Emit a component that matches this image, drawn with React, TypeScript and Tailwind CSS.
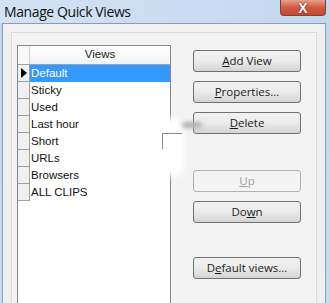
const font = { fontFamily: '"Liberation Sans", Arial, sans-serif' };

const rows = ["Default", "Sticky", "Used", "Last hour", "Short", "URLs", "Browsers", "ALL CLIPS"];

function Btn({ children, top, disabled }: { children: React.ReactNode; top: number; disabled?: boolean }) {
  return (
    <div
      className={
        "flex h-[22px] w-[108px] items-center justify-center rounded-[3px] border text-[11.5px] " +
        (disabled
          ? "border-[#adb2b5] bg-[#f4f4f4] text-[#a0a0a0]"
          : "border-[#707070] bg-gradient-to-b from-[#f2f2f2] via-[#ebebeb] to-[#d4d4d4] text-[#1a1a1a]")
      }
      style={{ marginTop: top }}
    >
      {children}
    </div>
  );
}

export default function App() {
  return (
    <div
      className="relative flex h-[303px] w-[329px] flex-col overflow-hidden bg-gradient-to-b from-[#c2d7ef] to-[#c9dcf1]"
      style={{ fontFamily: '"Liberation Sans", Arial, sans-serif' }}
    >
      {/* title bar */}
      <div className="relative flex h-[23px] shrink-0 items-center bg-gradient-to-r from-[#d3e3f5] to-[#c3d7ee] pl-[4px]">
        <span className="text-[14px] tracking-[-0.4px] text-[#111]" style={{ fontFamily: '"Open Sans", "Liberation Sans", sans-serif' }}>
          Manage Quick Views
        </span>
        <div className="absolute right-[3px] top-0 flex h-[16px] w-[46px] items-center justify-center rounded-b-[4px] border border-t-0 border-[#8a3c30] bg-gradient-to-b from-[#e6a08f] via-[#cf5a44] to-[#c44a33]">
          <span className="text-[14px] font-bold leading-none text-white" style={{ textShadow: "0 0 2px #6a2010, 0 0 1px #6a2010" }}>
            X
          </span>
        </div>
      </div>

      {/* client */}
      <div className="ml-[2px] mr-[3px] flex-1 border-l border-t border-r border-[#8a9db5] bg-[#f0f0f0] px-[8px] pt-[8px]">
        <div className="flex h-full border-l border-t border-r border-[#dcdcdc] bg-[#f3f3f3] pl-[5px] pr-[15px] pt-[12px]">
          {/* list */}
          <div className="flex h-[260px] w-[157px] flex-col border border-[#828790] bg-white" style={font}>
            <div className="flex h-[19px] border-b border-[#a0a0a0]">
              <div className="w-[12px] border-r border-[#d0d0d0] bg-[#f7f7f7]" />
              <div className="flex flex-1 items-center justify-center bg-gradient-to-b from-white to-[#f2f2f2] text-[11.5px] text-[#1e1e1e]">
                Views
              </div>
            </div>
            {rows.map((r, i) => (
              <div key={r} className="flex h-[17px]">
                <div className="relative w-[12px] border-b border-r border-[#a0a0a0] bg-[#f0f0f0]">
                  {i === 0 && (
                    <div className="absolute left-[3px] top-[3px] h-0 w-0 border-y-[5px] border-l-[6px] border-y-transparent border-l-black" />
                  )}
                </div>
                <div
                  className={
                    "flex items-center pl-[1px] text-[11.5px] leading-none " +
                    (i === 0 ? "flex-1 bg-[#3399ff] text-white" : "text-[#111]")
                  }
                >
                  {r}
                </div>
              </div>
            ))}
          </div>

          {/* buttons */}
          <div className="ml-[22px] flex flex-col pt-[5px]" style={{ fontFamily: '"Open Sans", "Liberation Sans", sans-serif' }}>
            <Btn top={0}>
              <span><u>A</u>dd View</span>
            </Btn>
            <Btn top={9}>
              <span><u>P</u>roperties...</span>
            </Btn>
            <Btn top={9}>
              <span><u>D</u>elete</span>
            </Btn>
            <Btn top={36} disabled>
              <span><u>U</u>p</span>
            </Btn>
            <Btn top={9}>
              <span>Do<u>w</u>n</span>
            </Btn>
            <Btn top={34}>
              <span>D<u>e</u>fault views...</span>
            </Btn>
          </div>
        </div>
      </div>

      {/* leftover tooltip smudge */}
      <div className="absolute left-[148px] top-[118px] h-[58px] w-[36px] rounded-[10px] bg-white blur-[3px]" />
      <div className="absolute left-[162px] top-[133px] h-[16px] w-[20px] border-l border-t border-[#8a8a8a] bg-white" />
      <div className="absolute left-[182px] top-[122px] h-[6px] w-[20px] rounded-full bg-[#b0b0b0] blur-[2px]" />
    </div>
  );
}
